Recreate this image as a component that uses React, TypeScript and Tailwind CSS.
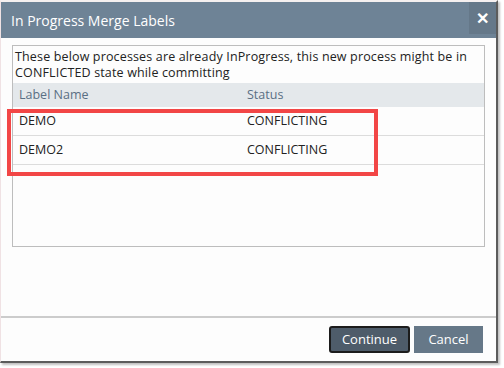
const rows = [
  { name: "DEMO", status: "CONFLICTING" },
  { name: "DEMO2", status: "CONFLICTING" },
];

export default function App() {
  return (
    <div
      className="w-[504px] h-[368px] bg-white"
      style={{ fontFamily: '"Open Sans", "Noto Sans", sans-serif' }}
    >
      <div className="relative w-[498px] h-[363px] flex flex-col bg-[#fdfdfd] border-l border-l-[#f0e2e4] border-r-2 border-r-[#5c5c5c] border-b-2 border-b-[#5c5c5c] border-t-2 border-t-[#f5f0f0] shadow-[2px_2px_2px_rgba(0,0,0,0.25)]">
        <div className="flex h-[36px] items-stretch justify-between bg-[#6e8396] pl-[10px]">
          <div className="flex items-center text-[14px] text-white">
            In Progress Merge Labels
          </div>
          <button className="flex w-[27px] h-[32px] items-center justify-center bg-[#657889] text-white text-[16px] font-bold">
            ✕
          </button>
        </div>
        <div className="flex-1 px-[11px] pt-[7px]">
          <div className="h-[202px] border border-[#bdbdbd] bg-[#fdfdfd]">
            <p className="px-[2px] pt-[3px] text-[12.5px] leading-[16px] tracking-[0.15px] text-[#222]">
              These below processes are already InProgress, this new process might be in CONFLICTED state while committing
            </p>
            <div className="mt-[2px] grid grid-cols-[228px_1fr] h-[24px] items-center bg-[#e4e8eb] px-[6px] text-[12.5px] text-[#5a6f84]">
              <span>Label Name</span>
              <span>Status</span>
            </div>
            {rows.map((r) => (
              <div
                key={r.name}
                className="grid grid-cols-[228px_1fr] h-[29px] items-center border-b border-[#dcdcdc] px-[6px] text-[12.5px] text-[#222]"
              >
                <span>{r.name}</span>
                <span>{r.status}</span>
              </div>
            ))}
          </div>
        </div>
        <div className="absolute left-[6px] top-[107px] w-[371px] h-[67px] border-4 border-[#f24646]" />
        <div className="flex h-[45px] items-center justify-end gap-[4px] border-t-2 border-[#cccccc] pr-[13px]">
          <button className="w-[81px] h-[27px] rounded-[3px] border-2 border-[#1c1c1c] bg-[#4e5c6a] text-[13px] text-white">
            Continue
          </button>
          <button className="w-[69px] h-[27px] bg-[#667888] text-[13px] text-white">
            Cancel
          </button>
        </div>
      </div>
    </div>
  );
}
